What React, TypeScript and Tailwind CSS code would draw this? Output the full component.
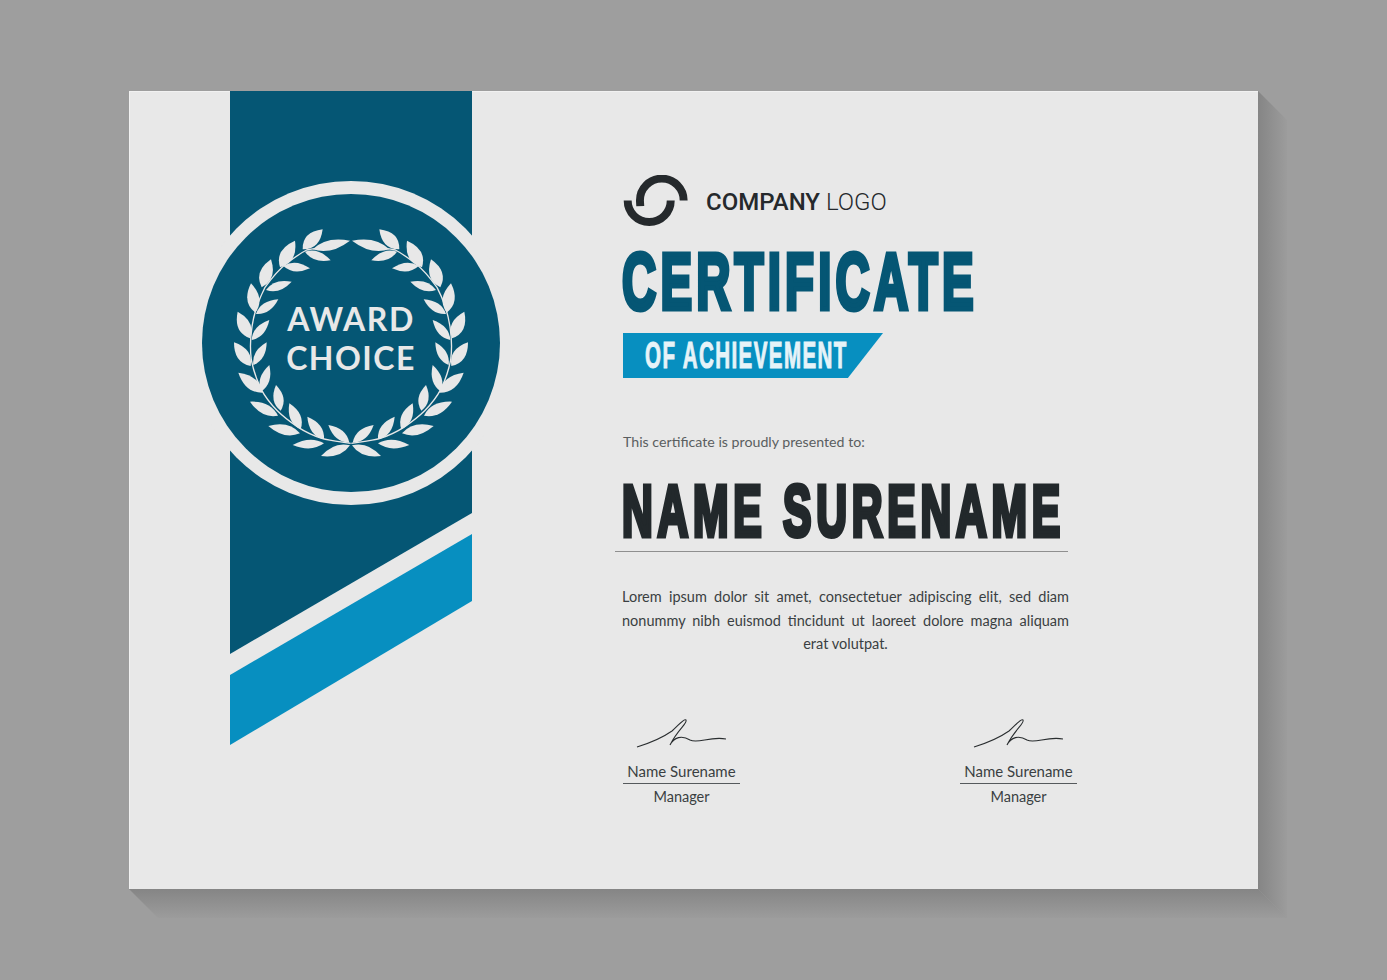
const CENTER = 483;

// wreath leaves for the left half, [baseX, baseY, tipX, tipY, bulge], traced at 3x
const leaves: number[][] = [
  [368, 238, 480, 212, 15],
  [338, 238, 398, 178, -19],
  [345, 245, 422, 271, -13],
  [270, 292, 315, 212, -20],
  [280, 288, 360, 295, -13],
  [215, 352, 243, 268, -19],
  [228, 360, 305, 335, -13],
  [196, 428, 183, 340, -18],
  [198, 432, 265, 388, -13],
  [180, 505, 143, 425, -19],
  [185, 510, 238, 450, -13],
  [182, 588, 132, 517, -18],
  [190, 585, 230, 517, -13],
  [218, 668, 145, 608, -17],
  [213, 665, 238, 585, 14],
  [264, 737, 180, 695, -15],
  [272, 722, 258, 645, 15],
  [330, 790, 235, 768, -15],
  [332, 778, 298, 700, 16],
  [402, 820, 308, 825, -13],
  [402, 808, 352, 740, 15],
  [478, 818, 415, 765, 14],
  [480, 826, 393, 858, 14],
];

const STEM = "M482 820 C450 815 420 812 395 805 C365 795 345 785 325 772 C300 755 280 740 262 722 C240 700 225 680 212 655 C198 625 190 600 184 570 C180 540 180 510 186 470 C192 430 205 390 225 352 C245 325 265 300 290 280 C310 265 330 250 350 240 C370 235 395 233 420 232";

function leafPath([bx, by, tx, ty, bulge]: number[]) {
  const dx = tx - bx;
  const dy = ty - by;
  const len = Math.hypot(dx, dy);
  const nx = -dy / len;
  const ny = dx / len;
  // the belly sits nearer the base, so the leaf tapers to a point
  const ax = bx + dx * 0.42 + nx * bulge * 2;
  const ay = by + dy * 0.42 + ny * bulge * 2;
  const cx = bx + dx * 0.42 - nx * bulge * 2;
  const cy = by + dy * 0.42 - ny * bulge * 2;
  return `M${bx} ${by} Q${ax} ${ay} ${tx} ${ty} Q${cx} ${cy} ${bx} ${by}Z`;
}

function Half() {
  return (
    <>
      <path d={STEM} fill="none" stroke="#e8e8e8" strokeWidth="4" />
      {leaves.map((l, i) => (
        <path key={i} d={leafPath(l)} fill="#e8e8e8" />
      ))}
    </>
  );
}

function Wreath() {
  return (
    <svg viewBox="0 0 960 1020" className="absolute left-[-12px] top-[-24px] h-[340px] w-[320px]">
      <Half />
      <g transform={`translate(${CENTER * 2} 0) scale(-1 1)`}>
        <Half />
      </g>
    </svg>
  );
}

function Signature() {
  return (
    <svg viewBox="0 0 140 50" className="ml-[-13px] h-[50px] w-[140px]">
      <path
        d="M27 46 C40 42 52 37 62 30 C68 25 74 17 76 19 C78 22 68 28 60 44 C64 36 72 34 80 39 C88 43 100 35 116 38"
        fill="none"
        stroke="#2a2e30"
        strokeWidth="1.1"
      />
    </svg>
  );
}

function Signer() {
  return (
    <div className="w-[117px] text-center text-[#3a3f42] [font-family:Lato,sans-serif]">
      <Signature />
      <div className="h-[33px] whitespace-nowrap border-b border-[#55595c] pt-[8px] text-[15px] leading-[24px]">Name Surename</div>
      <div className="text-[14.5px] leading-[25px]">Manager</div>
    </div>
  );
}

function LogoMark() {
  return (
    <svg viewBox="36 31 200 160" className="h-[53px] w-[67px]">
      <path d="M90 125 L89 108 A66 66 0 0 1 221 108" fill="none" stroke="#25292c" strokeWidth="24" />
      <path d="M52 108 A65 65 0 0 0 182 108" fill="none" stroke="#25292c" strokeWidth="24" />
    </svg>
  );
}

export default function App() {
  return (
    <div className="relative h-[980px] w-[1387px] overflow-hidden bg-[#9e9e9e] pl-[129px] pt-[91px]">
      {/* long shadow behind the sheet */}
      <svg className="absolute left-0 top-0 h-[980px] w-[1387px]" viewBox="0 0 1387 980">
        <defs>
          <linearGradient id="sr" x1="0" x2="1" y1="0" y2="0">
            <stop offset="0" stopColor="#858585" />
            <stop offset="1" stopColor="#9c9c9c" />
          </linearGradient>
          <linearGradient id="sb" x1="0" x2="0" y1="0" y2="1">
            <stop offset="0" stopColor="#858585" />
            <stop offset="1" stopColor="#9c9c9c" />
          </linearGradient>
        </defs>
        <polygon points="1258,91 1287,120 1287,918 1258,889" fill="url(#sr)" />
        <polygon points="129,889 1258,889 1287,918 158,918" fill="url(#sb)" />
      </svg>

      <div className="relative flex h-[798px] w-[1129px] border-l border-t border-[#f1f1f1] bg-[#e8e8e8]">
        <div className="w-[492px] shrink-0 pl-[100px]">
          <div className="relative mt-[-1px] h-[654px] w-[242px]">
            <div className="h-[654px] bg-[#055674] [clip-path:polygon(0_0,100%_0,100%_422px,0_563px)]" />
            <div className="absolute left-0 top-[443px] h-[211px] w-[242px] bg-[#078fc0] [clip-path:polygon(100%_0,100%_67px,0_100%,0_141px)]" />
            <div className="absolute left-[-41px] top-[90px] flex h-[324px] w-[324px] items-center justify-center rounded-full bg-[#e8e8e8]">
              <div className="relative flex h-[298px] w-[298px] flex-col items-center justify-center rounded-full bg-[#055674]">
                <Wreath />
                <div className="relative mt-[-11px] text-center text-[32px] font-bold leading-[39px] tracking-[1.5px] text-[#e8e8e8] [font-family:Lato,sans-serif]">
                  <div>AWARD</div>
                  <div>CHOICE</div>
                </div>
              </div>
            </div>
          </div>
        </div>

        <div className="pt-[83px]">
          <div className="flex h-[53px] items-center">
            <LogoMark />
            <div className="ml-[17px] whitespace-nowrap text-[24px] text-[#25292c] [font-family:Roboto,sans-serif]">
              <span className="font-medium">COMPANY</span> <span className="font-light">LOGO</span>
            </div>
          </div>

          <div className="mt-[14px] h-[80px] origin-left scale-x-[0.593] whitespace-nowrap text-[80px] font-bold leading-[80px] tracking-[7px] text-[#055674] [-webkit-text-stroke:5px_#055674] [font-family:'Liberation_Sans',sans-serif]">
            CERTIFICATE
          </div>

          <div className="ml-px mt-[11px] flex h-[45px] w-[260px] items-center bg-[#078fc0] pl-[22px] [clip-path:polygon(0_0,100%_0,86.5%_100%,0_100%)]">
            <div className="origin-left scale-x-[0.57] whitespace-nowrap text-[36px] font-bold leading-[45px] tracking-[2.5px] text-[#e6f3f8] [-webkit-text-stroke:1px_#e6f3f8] [font-family:'Liberation_Sans',sans-serif]">
              OF ACHIEVEMENT
            </div>
          </div>

          <div className="ml-px mt-[53px] h-[22px] text-[14.2px] leading-[22px] text-[#5a5e60] [font-family:Lato,sans-serif]">
            This certificate is proudly presented to:
          </div>

          <div className="ml-[-7px] mt-[18px] h-[81px] w-[453px] border-b border-[#8f8f8f] pl-[7px]">
            <div className="origin-left scale-x-[0.592] whitespace-nowrap text-[72px] font-bold leading-[80px] tracking-[8px] text-[#22282b] [-webkit-text-stroke:5px_#22282b] [font-family:'Liberation_Sans',sans-serif]">
              NAME SURENAME
            </div>
          </div>

          <p className="mt-[33px] w-[447px] text-justify text-[14.5px] leading-[23.5px] text-[#3a3f42] [font-family:Lato,sans-serif] [text-align-last:center]">
            Lorem ipsum dolor sit amet, consectetuer adipiscing elit, sed diam nonummy nibh euismod tincidunt ut laoreet dolore magna aliquam erat volutpat.
          </p>

          <div className="ml-px mt-[45px] flex w-[454px] justify-between">
            <Signer />
            <Signer />
          </div>
        </div>
      </div>
    </div>
  );
}
